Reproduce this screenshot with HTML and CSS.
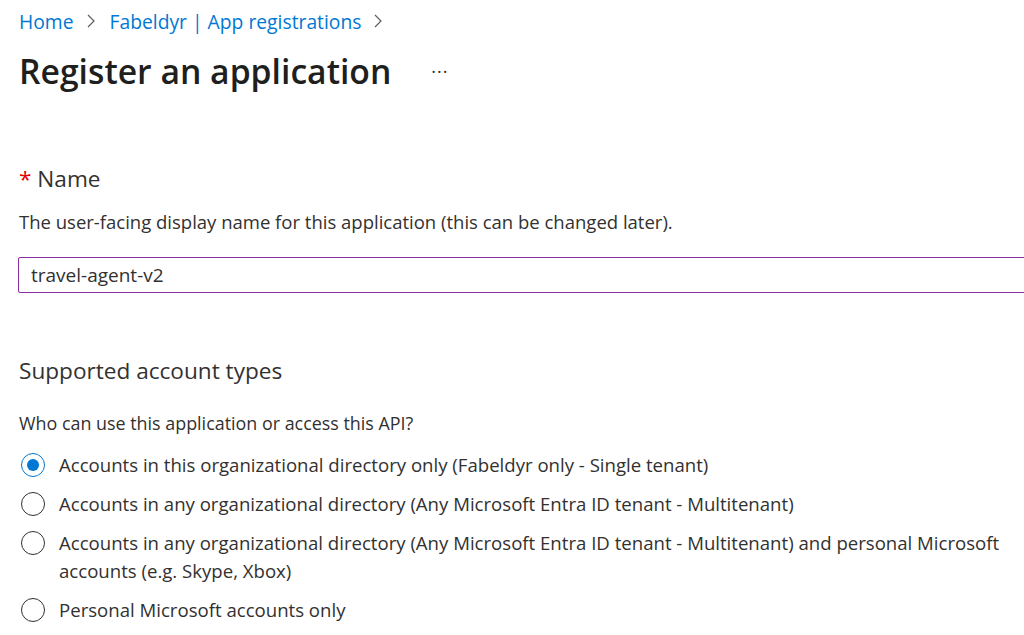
FILE: index.html
```html
<!DOCTYPE html>
<html lang="en">
<head>
<meta charset="utf-8">
<title>Register an application</title>
<link rel="stylesheet" href="styles.css">
</head>
<body>
<main class="page">
  <nav class="breadcrumb">
    <a href="#">Home</a>
    <span class="sep"><svg width="10" height="16" viewBox="0 0 10 16"><path d="M2 2 L8 8 L2 14" fill="none" stroke="#605e5c" stroke-width="1.2"/></svg></span>
    <a href="#">Fabeldyr | App registrations</a>
    <span class="sep"><svg width="10" height="16" viewBox="0 0 10 16"><path d="M2 2 L8 8 L2 14" fill="none" stroke="#605e5c" stroke-width="1.2"/></svg></span>
  </nav>
  <header class="title-row">
    <h1 class="title">Register an application</h1>
    <span class="more">···</span>
  </header>

  <section class="field">
    <h2 class="label"><span class="req">*</span> Name</h2>
    <p class="desc">The user-facing display name for this application (this can be changed later).</p>
    <div class="input">travel-agent-v2</div>
  </section>

  <section class="accounts">
    <h2 class="label">Supported account types</h2>
    <p class="desc desc-q">Who can use this application or access this API?</p>
    <ul class="radios">
      <li class="radio checked"><span class="dot"></span><span class="rtext">Accounts in this organizational directory only (Fabeldyr only - Single tenant)</span></li>
      <li class="radio"><span class="dot"></span><span class="rtext">Accounts in any organizational directory (Any Microsoft Entra ID tenant - Multitenant)</span></li>
      <li class="radio"><span class="dot"></span><span class="rtext">Accounts in any organizational directory (Any Microsoft Entra ID tenant - Multitenant) and personal Microsoft accounts (e.g. Skype, Xbox)</span></li>
      <li class="radio"><span class="dot"></span><span class="rtext">Personal Microsoft accounts only</span></li>
    </ul>
  </section>
</main>
</body>
</html>
```

FILE: styles.css
```css
html, body {
  margin: 0;
  padding: 0;
  background: #ffffff;
  overflow: hidden;
}
body {
  font-family: "Open Sans", "Noto Sans", sans-serif;
  color: #323130;
}
.page {
  padding: 7px 0 0 19px;
  width: 1100px;
}
.breadcrumb {
  display: flex;
  align-items: center;
  gap: 12px;
  height: 28px;
  font-size: 19.3px;
}
.breadcrumb a {
  color: #0078d4;
  text-decoration: none;
}
.sep {
  display: flex;
  align-items: center;
  margin-right: 2px;
}
.title-row {
  display: flex;
  align-items: center;
  gap: 40px;
  margin-top: 13px;
  height: 46px;
}
.title {
  margin: 0;
  font-size: 33.7px;
  font-weight: 600;
  color: #201f1e;
}
.more {
  font-size: 18px;
  color: #323130;
  letter-spacing: 1px;
}
.field {
  margin-top: 70px;
}
.label {
  margin: 0;
  font-size: 22.6px;
  font-weight: 400;
  line-height: 30px;
  color: #323130;
}
.req {
  color: #e50000;
}
.desc {
  margin: 15px 0 0;
  font-size: 18.5px;
  line-height: 26px;
  color: #323130;
}
.desc-q {
  margin-top: 24px;
  font-size: 17.9px;
}
.input {
  margin: 22px 0 0 -1px;
  width: 1040px;
  height: 34px;
  border: 1px solid #8a2da5;
  border-radius: 2px;
  box-sizing: content-box;
  padding: 0 12px;
  font-size: 19px;
  line-height: 34px;
  color: #323130;
}
.accounts {
  margin-top: 63px;
}
.radios {
  list-style: none;
  margin: 15px 0 0;
  padding: 0;
}
.radio {
  display: flex;
  align-items: flex-start;
  gap: 14px;
  font-size: 18.6px;
  line-height: 28px;
  margin-bottom: 11px;
  width: 985px;
}
.dot {
  flex: none;
  width: 24px;
  height: 24px;
  border: 1px solid #323130;
  border-radius: 50%;
  margin: 2px 0 0 2px;
  box-sizing: border-box;
  position: relative;
}
.checked .dot {
  border-color: #0078d4;
}
.checked .dot::after {
  content: "";
  position: absolute;
  left: 5px;
  top: 5px;
  width: 12px;
  height: 12px;
  border-radius: 50%;
  background: #0078d4;
}
.rtext {
  color: #323130;
}
```
